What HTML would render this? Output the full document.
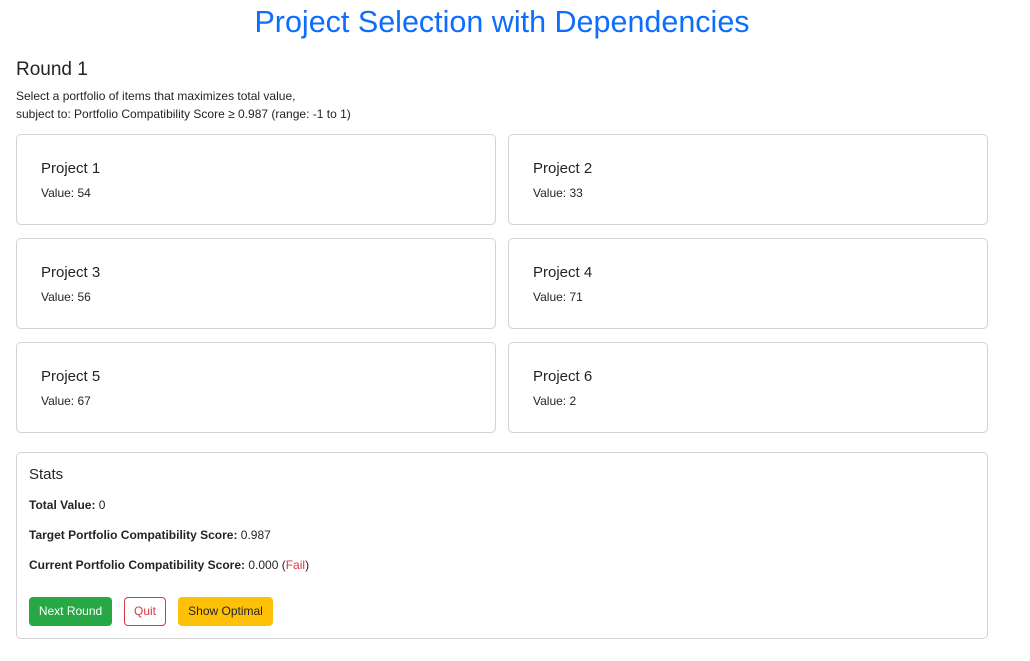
<!DOCTYPE html>
<html><head><meta charset="utf-8"><style>
*{box-sizing:border-box;margin:0;padding:0}
body{width:1030px;height:661px;background:#fff;font-family:"Liberation Sans",sans-serif;color:#212529;position:relative;overflow:hidden}
.a{position:absolute;white-space:nowrap}
h1{position:absolute;left:0;width:1004px;text-align:center;top:5px;font-size:30.5px;font-weight:500;color:#0d6efd}
.card{position:absolute;width:480px;height:91px;border:1px solid #d3d3d3;border-radius:5px}
.card .t{position:absolute;left:24px;top:25px;font-size:15px;font-weight:500}
.card .v{position:absolute;left:24px;top:51px;font-size:12px}
.s{font-size:12px}
.btn{position:absolute;top:597px;height:29px;border-radius:4px;font-size:12px;line-height:29px;text-align:center}
</style></head><body>
<h1>Project Selection with Dependencies</h1>
<div class="a" style="left:16px;top:59px;font-size:19px;font-weight:500">Round 1</div>
<div class="a s" style="left:16px;top:89px">Select a portfolio of items that maximizes total value,</div>
<div class="a s" style="left:16px;top:107px">subject to: Portfolio Compatibility Score ≥ 0.987 (range: -1 to 1)</div>
<div class="card" style="left:16px;top:134px"><div class="t">Project 1</div><div class="v">Value: 54</div></div>
<div class="card" style="left:508px;top:134px"><div class="t">Project 2</div><div class="v">Value: 33</div></div>
<div class="card" style="left:16px;top:238px"><div class="t">Project 3</div><div class="v">Value: 56</div></div>
<div class="card" style="left:508px;top:238px"><div class="t">Project 4</div><div class="v">Value: 71</div></div>
<div class="card" style="left:16px;top:342px"><div class="t">Project 5</div><div class="v">Value: 67</div></div>
<div class="card" style="left:508px;top:342px"><div class="t">Project 6</div><div class="v">Value: 2</div></div>
<div style="position:absolute;left:16px;top:452px;width:972px;height:187px;border:1px solid #d3d3d3;border-radius:5px"></div>
<div class="a" style="left:29px;top:466px;font-size:15px;font-weight:500">Stats</div>
<div class="a s" style="left:29px;top:498px"><b>Total Value:</b> 0</div>
<div class="a s" style="left:29px;top:528px"><b>Target Portfolio Compatibility Score:</b> 0.987</div>
<div class="a s" style="left:29px;top:558px"><b>Current Portfolio Compatibility Score:</b> 0.000 (<span style="color:#dc3545">Fail</span>)</div>
<div class="btn" style="left:29px;width:83px;background:#28a745;color:#fff">Next Round</div>
<div class="btn" style="left:124px;width:42px;border:1px solid #dc3545;color:#dc3545;line-height:27px">Quit</div>
<div class="btn" style="left:178px;width:95px;background:#ffc107;color:#212529">Show Optimal</div>
</body></html>
